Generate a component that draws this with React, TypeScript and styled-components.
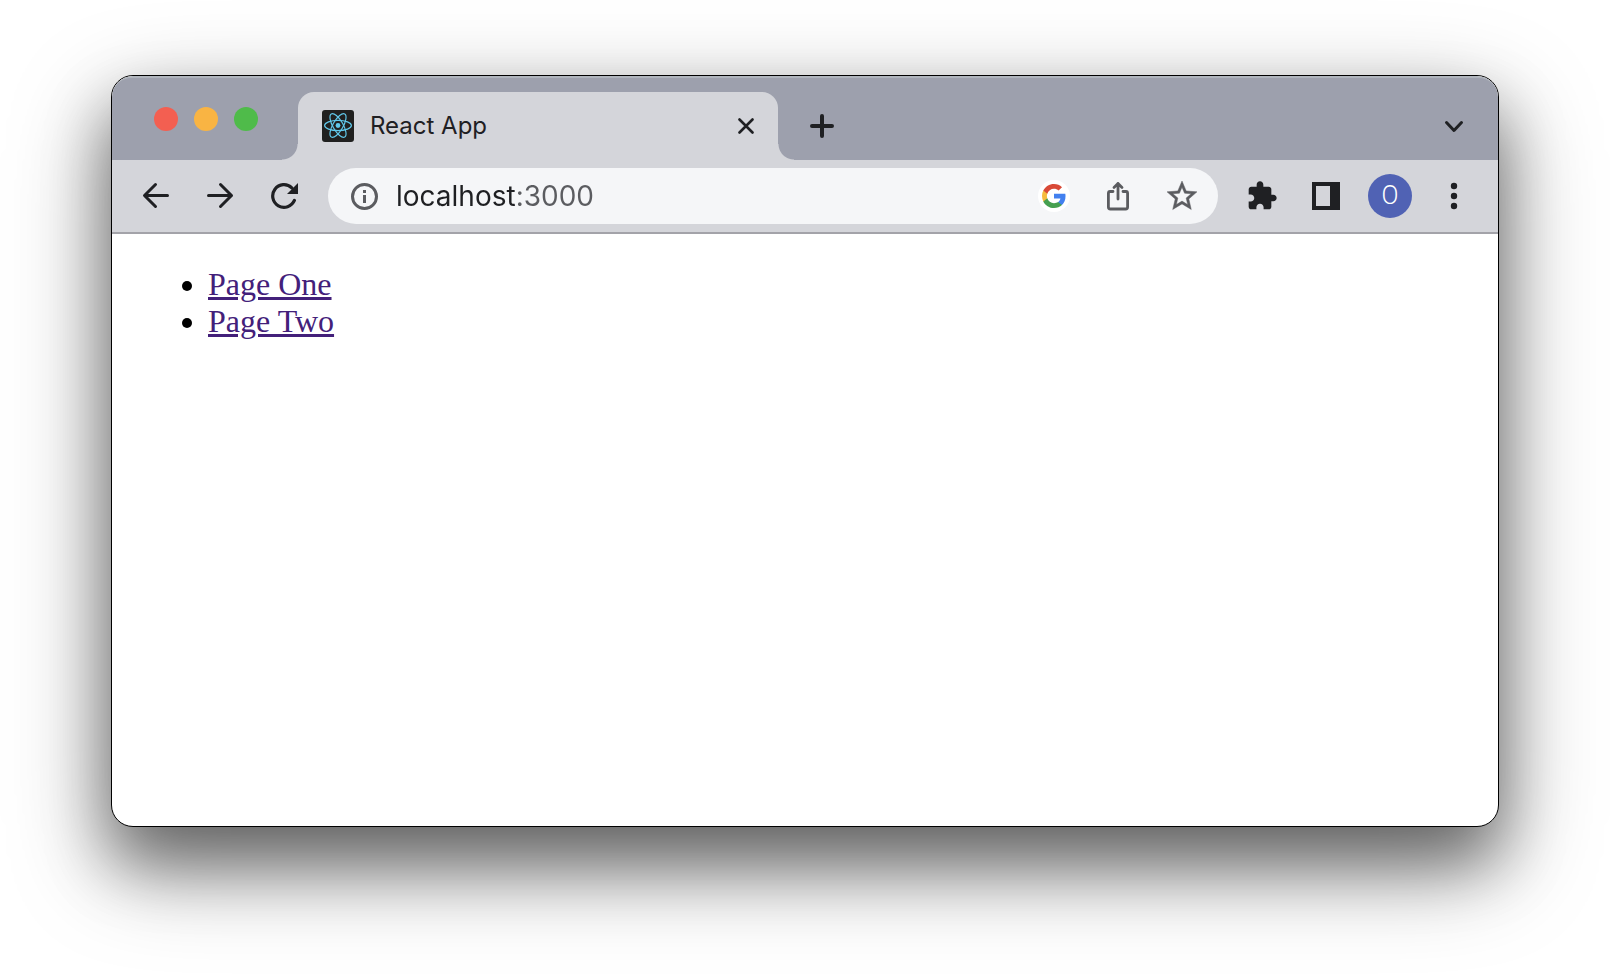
import React from "react";
import styled, { createGlobalStyle } from "styled-components";

const ink = "#1f2023";
const muted = "#5b5c60";
const chrome = "#d4d5da";
const strip = "#9da0ad";
const sans = `Inter, "Liberation Sans", sans-serif`;

const GlobalStyle = createGlobalStyle`
  *, *::before, *::after { box-sizing: border-box; }
  body { margin: 0; background: #fff; }
`;

const Desktop = styled.div`
  min-height: 100vh;
  padding: 75px 111px 147px;
  display: flex;
`;

const BrowserWindow = styled.div`
  flex: 1;
  min-width: 0;
  display: flex;
  flex-direction: column;
  overflow: hidden;
  border: 1px solid #000;
  border-radius: 22px;
  background: #fff;
  box-shadow:
    0 36px 100px rgba(0, 0, 0, 0.4),
    0 36px 64px rgba(0, 0, 0, 0.4);
  font-family: ${sans};
  color: ${ink};
`;

const TabStrip = styled.header`
  height: 84px;
  display: flex;
  align-items: center;
  padding: 0 16px 0 42px;
  border-top: 2px solid #b0b5bd;
  border-radius: 20px 20px 0 0;
  background: ${strip};
`;

const WindowControls = styled.div`
  display: flex;
  gap: 16px;
  margin-right: 40px;
`;

const WindowControl = styled.button<{ $color: string }>`
  width: 24px;
  height: 24px;
  padding: 0;
  border: 0;
  border-radius: 50%;
  background: ${(p) => p.$color};
`;

const Tab = styled.div`
  position: relative;
  align-self: flex-end;
  width: 480px;
  height: 68px;
  display: flex;
  align-items: center;
  gap: 16px;
  padding: 0 16px 0 24px;
  border-radius: 16px 16px 0 0;
  background: ${chrome};

  &::before,
  &::after {
    content: "";
    position: absolute;
    bottom: 0;
    width: 16px;
    height: 16px;
  }
  &::before {
    right: 100%;
    background: radial-gradient(circle at 0 0, transparent 15px, ${chrome} 16px);
  }
  &::after {
    left: 100%;
    background: radial-gradient(circle at 100% 0, transparent 15px, ${chrome} 16px);
  }
`;

const TabTitle = styled.span`
  flex: 1;
  font-size: 24px;
  line-height: 32px;
`;

const IconButton = styled.button<{ $width?: number; $color?: string }>`
  flex: none;
  width: ${(p) => p.$width ?? 56}px;
  height: 56px;
  padding: 0;
  border: 0;
  background: none;
  color: ${(p) => p.$color ?? ink};
  display: flex;
  align-items: center;
  justify-content: center;
`;

const StripButton = styled(IconButton)`
  align-self: flex-end;
  height: 68px;
`;

const NewTabButton = styled(StripButton)`
  margin: 0 auto 0 16px;
`;

const Toolbar = styled.nav`
  display: flex;
  align-items: center;
  gap: 16px;
  padding: 8px 16px;
  border-bottom: 2px solid #a3a3a9;
  background: ${chrome};
`;

const ButtonGroup = styled.div`
  display: flex;
  gap: 8px;
`;

const AddressBar = styled.form`
  flex: 1;
  min-width: 0;
  height: 56px;
  display: flex;
  align-items: center;
  padding: 0 8px;
  border-radius: 28px;
  background: #f5f6f8;
`;

/* The host name is dark and the port after it is grey. */
const AddressInput = styled.input`
  flex: 1;
  min-width: 0;
  height: 40px;
  padding: 0 0 0 4px;
  border: 0;
  outline: 0;
  font: 400 28px/40px ${sans};
  color: transparent;
  caret-color: ${ink};
  background: linear-gradient(90deg, ${ink} 124px, ${muted} 124px);
  background-clip: text;
  -webkit-background-clip: text;
`;

const GoogleBadge = styled.span`
  width: 32px;
  height: 32px;
  border-radius: 50%;
  background: #fff;
  display: flex;
  align-items: center;
  justify-content: center;
`;

const Avatar = styled.span`
  width: 44px;
  height: 44px;
  border-radius: 50%;
  background: #5062b4;
  color: #fff;
  font: 300 25px/44px Roboto, sans-serif;
  text-align: center;
`;

const Page = styled.main`
  flex: 1;
  padding: 0 16px;
  font: 32px/37px "Liberation Serif", "Times New Roman", serif;
  color: #000;
`;

const PageList = styled.ul`
  margin: 32px 0;
  padding-left: 80px;
`;

const PageLink = styled.a`
  color: #43207a;
  text-decoration: underline;
  text-decoration-thickness: 3px;
`;

const ReactLogo = () => (
  <svg width="32" height="32" viewBox="0 0 32 32" aria-hidden="true">
    <rect width="32" height="32" rx="3" fill="#20201f" />
    <g fill="none" stroke="#61c8ea" strokeWidth="1.2">
      <ellipse cx="16" cy="15.5" rx="13.4" ry="5.1" />
      <ellipse cx="16" cy="15.5" rx="13.4" ry="5.1" transform="rotate(60 16 15.5)" />
      <ellipse cx="16" cy="15.5" rx="13.4" ry="5.1" transform="rotate(120 16 15.5)" />
    </g>
    <circle cx="16" cy="15.5" r="2.4" fill="#61c8ea" />
  </svg>
);

type StrokeProps = { size: number; width: number; d: string };

const StrokeIcon = ({ size, width, d }: StrokeProps) => (
  <svg
    width={size}
    height={size}
    viewBox={`0 0 ${size} ${size}`}
    fill="none"
    stroke="currentColor"
    strokeWidth={width}
    strokeLinecap="round"
    strokeLinejoin="round"
    aria-hidden="true"
  >
    <path d={d} />
  </svg>
);

const ReloadIcon = () => (
  <svg width="28" height="28" viewBox="0 0 28 28" aria-hidden="true">
    <path
      d="M21.8 5.8A11.3 11.3 0 1 0 24.4 18.4"
      fill="none"
      stroke="currentColor"
      strokeWidth="3.2"
      strokeLinecap="round"
    />
    <path d="M28 1V12H17z" fill="currentColor" />
  </svg>
);

const InfoIcon = () => (
  <svg width="28" height="28" viewBox="0 0 28 28" aria-hidden="true">
    <circle cx="14.5" cy="14.5" r="12" fill="none" stroke="currentColor" strokeWidth="3" />
    <path d="M13 8h3v3h-3zM13 13h3v8h-3z" fill="currentColor" />
  </svg>
);

const GoogleIcon = () => (
  <svg width="24" height="24" viewBox="1 1 22 22" aria-hidden="true">
    <path fill="#4280ef" d="M22.56 12.25c0-.78-.07-1.53-.2-2.25H12v4.26h5.92c-.26 1.37-1.04 2.53-2.21 3.31v2.77h3.57c2.08-1.92 3.28-4.74 3.28-8.09z" />
    <path fill="#469f50" d="M12 23c2.97 0 5.46-.98 7.28-2.66l-3.57-2.77c-.98.66-2.23 1.06-3.71 1.06-2.86 0-5.29-1.93-6.16-4.53H2.18v2.84C3.99 20.53 7.7 23 12 23z" />
    <path fill="#f6bb3d" d="M5.84 14.09c-.22-.66-.35-1.36-.35-2.09s.13-1.43.35-2.09V7.07H2.18C1.43 8.55 1 10.22 1 12s.43 3.45 1.18 4.93l2.85-2.22.81-.62z" />
    <path fill="#d94a38" d="M12 5.38c1.62 0 3.06.56 4.21 1.64l3.15-3.15C17.45 2.09 14.97 1 12 1 7.7 1 3.99 3.47 2.18 7.07l3.66 2.84c.87-2.6 3.3-4.53 6.16-4.53z" />
  </svg>
);

const StarIcon = () => (
  <svg width="36" height="36" viewBox="0 0 24 24" fill="currentColor" stroke="currentColor" strokeWidth="0.3" aria-hidden="true">
    <path d="M22 9.24l-7.19-.62L12 2 9.19 8.63 2 9.24l5.46 4.73L5.82 21 12 17.27 18.18 21l-1.63-7.03L22 9.24zM12 15.4l-3.76 2.27 1-4.28-3.32-2.88 4.38-.38L12 6.1l1.71 4.04 4.38.38-3.32 2.88 1 4.28L12 15.4z" />
  </svg>
);

const PuzzleIcon = () => (
  <svg width="32" height="32" viewBox="0 0 24 24" fill="currentColor" aria-hidden="true">
    <path d="M20.5 11H19V7c0-1.1-.9-2-2-2h-4V3.5C13 2.12 11.88 1 10.5 1S8 2.12 8 3.5V5H4c-1.1 0-1.99.9-1.99 2v3.8H3.5c1.49 0 2.7 1.21 2.7 2.7s-1.21 2.7-2.7 2.7H2V20c0 1.1.9 2 2 2h3.8v-1.5c0-1.49 1.21-2.7 2.7-2.7 1.49 0 2.7 1.21 2.7 2.7V22H17c1.1 0 2-.9 2-2v-4h1.5c1.38 0 2.5-1.12 2.5-2.5S21.88 11 20.5 11z" />
  </svg>
);

const SidePanelIcon = () => (
  <svg width="28" height="28" viewBox="0 0 28 28" fill="currentColor" aria-hidden="true">
    <path fillRule="evenodd" d="M0 0H28V28H0zM4 4V24H18V4z" />
  </svg>
);

const MenuIcon = () => (
  <svg width="28" height="28" viewBox="0 0 28 28" fill="currentColor" aria-hidden="true">
    <circle cx="14" cy="4" r="3.2" />
    <circle cx="14" cy="14" r="3.2" />
    <circle cx="14" cy="24" r="3.2" />
  </svg>
);

const controls = [
  { label: "Close window", color: "#f35f51" },
  { label: "Minimize window", color: "#f9b443" },
  { label: "Zoom window", color: "#4fbb4a" },
];

const pages = [
  { label: "Page One", href: "#page-one" },
  { label: "Page Two", href: "#page-two" },
];

export default function App() {
  return (
    <>
      <GlobalStyle />
      <Desktop>
        <BrowserWindow>
          <TabStrip>
            <WindowControls>
              {controls.map((c) => (
                <WindowControl key={c.label} type="button" aria-label={c.label} $color={c.color} />
              ))}
            </WindowControls>
            <Tab>
              <ReactLogo />
              <TabTitle>React App</TabTitle>
              <IconButton type="button" aria-label="Close tab" $width={32}>
                <StrokeIcon size={16} width={2.6} d="M1.5 1.5L14.5 14.5M14.5 1.5L1.5 14.5" />
              </IconButton>
            </Tab>
            <NewTabButton type="button" aria-label="New tab">
              <StrokeIcon size={24} width={4} d="M12 2V22M2 12H22" />
            </NewTabButton>
            <StripButton type="button" aria-label="Search tabs">
              <StrokeIcon size={20} width={3} d="M2.5 6.5L10 14.5L17.5 6.5" />
            </StripButton>
          </TabStrip>

          <Toolbar aria-label="Browser toolbar">
            <ButtonGroup>
              <IconButton type="button" aria-label="Back">
                <StrokeIcon size={28} width={3} d="M25.5 13.5H3M13.5 2.5L2.5 13.5L13.5 24.5" />
              </IconButton>
              <IconButton type="button" aria-label="Forward">
                <StrokeIcon size={28} width={3} d="M2.5 13.5H25.5M14.5 2.5L25.5 13.5L14.5 24.5" />
              </IconButton>
              <IconButton type="button" aria-label="Reload">
                <ReloadIcon />
              </IconButton>
            </ButtonGroup>

            <AddressBar onSubmit={(e: React.FormEvent) => e.preventDefault()}>
              <IconButton type="button" aria-label="Site information" $color={muted}>
                <InfoIcon />
              </IconButton>
              <AddressInput type="text" aria-label="Address" defaultValue="localhost:3000" />
              <ButtonGroup>
                <IconButton type="button" aria-label="Search with Google">
                  <GoogleBadge>
                    <GoogleIcon />
                  </GoogleBadge>
                </IconButton>
                <IconButton type="button" aria-label="Share" $color={muted}>
                  <StrokeIcon
                    size={32}
                    width={2.8}
                    d="M11 11.5H8Q6.4 11.5 6.4 13.5V27Q6.4 29 8.4 29H23.6Q25.6 29 25.6 27V13.5Q25.6 11.5 24 11.5H21M16 19V3.5M12 7.5L16 3.5L20 7.5"
                  />
                </IconButton>
                <IconButton type="button" aria-label="Bookmark" $color={muted}>
                  <StarIcon />
                </IconButton>
              </ButtonGroup>
            </AddressBar>

            <ButtonGroup>
              <IconButton type="button" aria-label="Extensions">
                <PuzzleIcon />
              </IconButton>
              <IconButton type="button" aria-label="Side panel">
                <SidePanelIcon />
              </IconButton>
              <IconButton type="button" aria-label="Profile">
                <Avatar>O</Avatar>
              </IconButton>
              <IconButton type="button" aria-label="Menu">
                <MenuIcon />
              </IconButton>
            </ButtonGroup>
          </Toolbar>

          <Page>
            <PageList>
              {pages.map((p) => (
                <li key={p.href}>
                  <PageLink href={p.href}>{p.label}</PageLink>
                </li>
              ))}
            </PageList>
          </Page>
        </BrowserWindow>
      </Desktop>
    </>
  );
}
